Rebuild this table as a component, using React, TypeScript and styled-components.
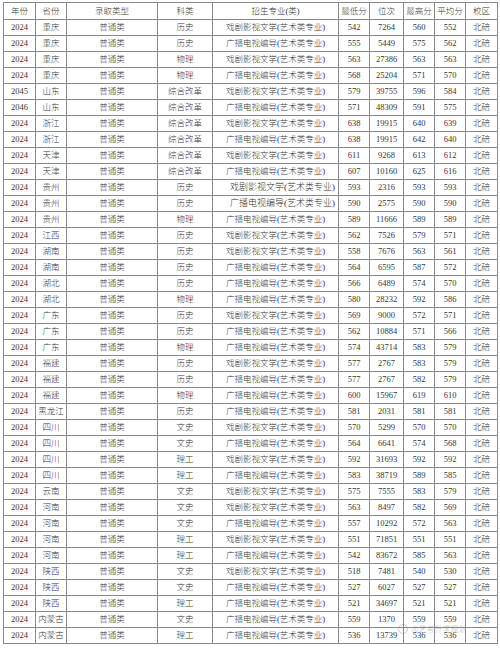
import React from 'react';
import styled, { createGlobalStyle } from 'styled-components';

const GlobalStyle = createGlobalStyle`
  html, body {
    margin: 0;
    padding: 0;
    background: #ffffff;
  }
`;

const Page = styled.div`
  position: relative;
  width: 500px;
  padding: 2px 3px 0;
  box-sizing: border-box;
  font-family: "Liberation Serif", "Noto Sans CJK SC", serif;
  color: #363636;
`;

const Table = styled.table`
  width: 494px;
  table-layout: fixed;
  border-collapse: collapse;
  border: 1px solid #6f6f6f;
`;

const Row = styled.tr<{ $head?: boolean }>`
  height: ${({ $head }) => ($head ? '17px' : '16px')};
`;

const Cell = styled.td`
  border: 1px solid #8a8a8a;
  padding: 0;
  font-size: 8.5px;
  line-height: 1;
  text-align: center;
  vertical-align: middle;
  white-space: nowrap;
  overflow: hidden;
  font-weight: 300;
`;

const MajorCell = styled(Cell)<{ $shift?: boolean }>`
  text-align: left;
  padding-left: ${({ $shift }) => ($shift ? '17px' : '13px')};
  font-size: ${({ $shift }) => ($shift ? '9px' : '8.5px')};
`;

const HeadCell = styled(Cell).attrs({ as: 'th' })`
  font-weight: 300;
`;

const Watermark = styled.div`
  position: absolute;
  left: 398px;
  top: 624px;
  display: flex;
  align-items: center;
  gap: 3px;
  font-family: "Noto Sans CJK SC", sans-serif;
  font-size: 8px;
  line-height: 1;
  color: rgba(130, 130, 130, 0.4);
  pointer-events: none;
`;

const WatermarkDot = styled.span`
  width: 8px;
  height: 8px;
  border-radius: 50%;
  border: 1px solid rgba(130, 130, 130, 0.4);
`;

const widths = [32, 31, 91, 55, 126, 31, 34, 31, 31, 32];
const headers = ['年份', '省份', '录取类型', '科类', '招生专业(类)', '最低分', '位次', '最高分', '平均分', '校区'];

const majors: Record<string, string> = {
  x: '戏剧影视文学(艺术类专业)',
  g: '广播电视编导(艺术类专业)',
};

type Item = [string, string, string, string, number, number, number, number];

const rows: Item[] = [
  ['2024', '重庆', '历史', 'x', 542, 7264, 560, 552],
  ['2024', '重庆', '历史', 'g', 555, 5449, 575, 562],
  ['2024', '重庆', '物理', 'x', 563, 27386, 563, 563],
  ['2024', '重庆', '物理', 'g', 568, 25204, 571, 570],
  ['2045', '山东', '综合改革', 'x', 579, 39755, 596, 584],
  ['2046', '山东', '综合改革', 'g', 571, 48309, 591, 575],
  ['2024', '浙江', '综合改革', 'x', 638, 19915, 640, 639],
  ['2024', '浙江', '综合改革', 'g', 638, 19915, 642, 640],
  ['2024', '天津', '综合改革', 'x', 611, 9268, 613, 612],
  ['2024', '天津', '综合改革', 'g', 607, 10160, 625, 616],
  ['2024', '贵州', '历史', 'x', 593, 2316, 593, 593],
  ['2024', '贵州', '历史', 'g', 590, 2575, 590, 590],
  ['2024', '贵州', '物理', 'g', 589, 11666, 589, 589],
  ['2024', '江西', '历史', 'x', 562, 7526, 579, 571],
  ['2024', '湖南', '历史', 'x', 558, 7676, 563, 561],
  ['2024', '湖南', '历史', 'g', 564, 6595, 587, 572],
  ['2024', '湖北', '历史', 'g', 566, 6489, 574, 570],
  ['2024', '湖北', '物理', 'g', 580, 28232, 592, 586],
  ['2024', '广东', '历史', 'x', 569, 9000, 572, 571],
  ['2024', '广东', '历史', 'g', 562, 10884, 571, 566],
  ['2024', '广东', '物理', 'g', 574, 43714, 583, 579],
  ['2024', '福建', '历史', 'x', 577, 2767, 583, 579],
  ['2024', '福建', '历史', 'g', 577, 2767, 582, 579],
  ['2024', '福建', '物理', 'g', 600, 15967, 619, 610],
  ['2024', '黑龙江', '历史', 'g', 581, 2031, 581, 581],
  ['2024', '四川', '文史', 'x', 570, 5299, 570, 570],
  ['2024', '四川', '文史', 'g', 564, 6641, 574, 568],
  ['2024', '四川', '理工', 'x', 592, 31693, 592, 592],
  ['2024', '四川', '理工', 'g', 583, 38719, 589, 585],
  ['2024', '云南', '文史', 'x', 575, 7555, 583, 579],
  ['2024', '河南', '文史', 'x', 563, 8497, 582, 569],
  ['2024', '河南', '文史', 'g', 557, 10292, 572, 563],
  ['2024', '河南', '理工', 'x', 551, 71851, 551, 551],
  ['2024', '河南', '理工', 'g', 542, 83672, 585, 563],
  ['2024', '陕西', '文史', 'x', 518, 7481, 540, 530],
  ['2024', '陕西', '文史', 'g', 527, 6027, 527, 527],
  ['2024', '陕西', '理工', 'g', 521, 34697, 521, 521],
  ['2024', '内蒙古', '文史', 'g', 559, 1370, 559, 559],
  ['2024', '内蒙古', '理工', 'g', 536, 13739, 536, 536],
];

export default function App() {
  return (
    <>
      <GlobalStyle />
      <Page>
        <Table>
          <colgroup>
            {widths.map((w, i) => (
              <col key={i} style={{ width: w }} />
            ))}
          </colgroup>
          <thead>
            <Row $head>
              {headers.map((h) => (
                <HeadCell key={h}>{h}</HeadCell>
              ))}
            </Row>
          </thead>
          <tbody>
            {rows.map(([year, prov, kind, major, min, rank, max, avg], i) => (
              <Row key={i}>
                <Cell>{year}</Cell>
                <Cell>{prov}</Cell>
                <Cell>普通类</Cell>
                <Cell>{kind}</Cell>
                <MajorCell $shift={prov === '贵州' && kind === '历史'}>{majors[major]}</MajorCell>
                <Cell>{min}</Cell>
                <Cell>{rank}</Cell>
                <Cell>{max}</Cell>
                <Cell>{avg}</Cell>
                <Cell>北碚</Cell>
              </Row>
            ))}
          </tbody>
        </Table>
        <Watermark>
          <WatermarkDot />
          <span>@艺考升学规划</span>
        </Watermark>
      </Page>
    </>
  );
}
